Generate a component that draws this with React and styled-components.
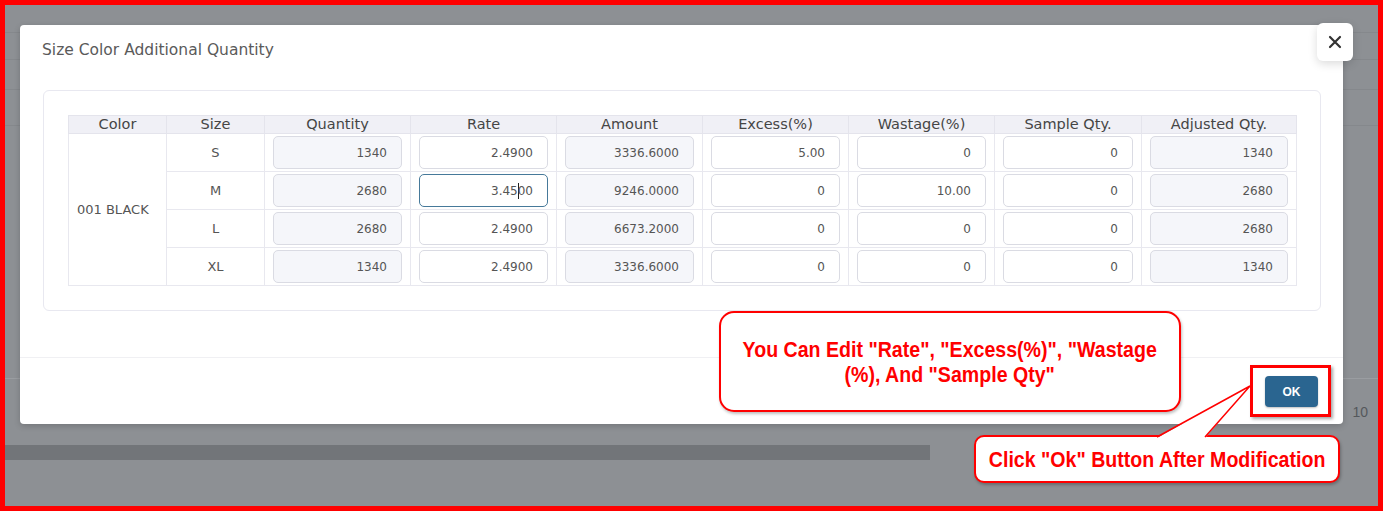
import React from "react";
import styled, { createGlobalStyle } from "styled-components";

const GlobalStyle = createGlobalStyle`
  html, body {
    margin: 0;
    padding: 0;
    background: #fff;
  }
  body {
    font-family: "DejaVu Sans", sans-serif;
  }
`;

const Frame = styled.div`
  position: relative;
  width: 1383px;
  height: 511px;
  box-sizing: border-box;
  border: 5px solid #ff0000;
  background: #8d9094;
  overflow: hidden;
`;

/* page behind the dimmed overlay */
const BgPage = styled.div`
  display: flex;
  flex-direction: column;
  height: 100%;
`;

const BgRow = styled.div`
  height: ${(p) => p.$h}px;
  flex-shrink: 0;
  box-sizing: border-box;
  border-bottom: 1px solid #85888c;
`;

const BgSpacer = styled.div`
  flex: 1;
`;

const BgPager = styled.div`
  height: 67px;
  flex-shrink: 0;
  box-sizing: border-box;
  border-top: 1px solid #9a9da1;
  display: flex;
  align-items: center;
  justify-content: flex-end;
  padding-right: 10px;
  font-family: "Liberation Sans", sans-serif;
  font-size: 14px;
  color: #55585c;
`;

const BgScroll = styled.div`
  height: 15px;
  width: 925px;
  flex-shrink: 0;
  background: #727579;
`;

const BgBottom = styled.div`
  height: 46px;
  flex-shrink: 0;
`;

const Overlay = styled.div`
  position: absolute;
  inset: 0;
  padding: 20px 0 0 15px;
`;

const Modal = styled.div`
  position: relative;
  width: 1323px;
  height: 399px;
  background: #fff;
  border-radius: 4px;
  box-shadow: 0 2px 6px rgba(0, 0, 0, 0.18);
  display: flex;
  flex-direction: column;
`;

const ModalHeader = styled.div`
  height: 50px;
  display: flex;
  align-items: center;
  padding-left: 22px;
`;

const Title = styled.div`
  font-size: 15.5px;
  color: #5a5a5a;
`;

const CloseButton = styled.div`
  position: absolute;
  top: -2px;
  right: -10px;
  width: 36px;
  height: 38px;
  background: #fff;
  border-radius: 6px;
  box-shadow: 0 3px 10px rgba(0, 0, 0, 0.14);
  display: flex;
  align-items: center;
  justify-content: center;
`;

const ModalBody = styled.div`
  padding: 15px 22px 46px 23px;
`;

const Card = styled.div`
  border: 1px solid #e8e8f0;
  border-radius: 6px;
  padding: 24px;
`;

const Table = styled.table`
  width: 1228px;
  border-collapse: collapse;
  table-layout: fixed;
`;

const Th = styled.th`
  box-sizing: border-box;
  width: ${(p) => p.$w}px;
  height: 18px;
  padding: 0;
  line-height: 17px;
  background: #f0f0f6;
  border: 1px solid #e4e4ec;
  font-size: 14.5px;
  font-weight: normal;
  color: #454545;
  text-align: center;
`;

const Td = styled.td`
  height: 37px;
  padding: 0 8px;
  border: 1px solid #e8e8ef;
  font-size: 13px;
  color: #555;
  text-align: ${(p) => p.$align || "center"};
  vertical-align: middle;
`;

const Field = styled.div`
  height: 33px;
  box-sizing: border-box;
  border: 1px solid ${(p) => (p.$focused ? "#46799a" : "#dadbe3")};
  border-radius: 5px;
  background: ${(p) => (p.$readOnly ? "#f5f6fa" : "#fff")};
  display: flex;
  align-items: center;
  justify-content: flex-end;
  padding-right: 14px;
  font-size: 12px;
  color: #555;
`;

const Caret = styled.span`
  display: inline-block;
  width: 1px;
  height: 16px;
  background: #222;
  margin: 0 -1px 0 0;
  vertical-align: middle;
`;

const ModalFooter = styled.div`
  height: 67px;
  box-sizing: border-box;
  border-top: 1px solid #f0f0f3;
  display: flex;
  align-items: center;
  justify-content: flex-end;
  padding-right: 12px;
`;

const Highlight = styled.div`
  border: 3px solid #ff0000;
  padding: 8px 10px 7px 12px;
  box-shadow: 2px 2px 3px rgba(0, 0, 0, 0.35);
`;

const OkButton = styled.div`
  width: 53px;
  height: 31px;
  border-radius: 4px;
  background: #2a6590;
  color: #fff;
  font-family: "Liberation Sans", sans-serif;
  font-size: 12px;
  font-weight: bold;
  display: flex;
  align-items: center;
  justify-content: center;
  box-shadow: 0 1px 2px rgba(0, 0, 0, 0.25);
`;

const Callout = styled.div`
  position: absolute;
  left: ${(p) => p.$x}px;
  top: ${(p) => p.$y}px;
  width: ${(p) => p.$w}px;
  height: ${(p) => p.$h}px;
  box-sizing: border-box;
  border: 2px solid #ff0000;
  border-radius: ${(p) => p.$r}px;
  background: #fff;
  box-shadow: 1px 2px 3px rgba(0, 0, 0, 0.25);
  display: flex;
  align-items: center;
  justify-content: center;
`;

/* narrow bold lettering, like Arial Narrow */
const CalloutText = styled.span`
  display: inline-block;
  white-space: nowrap;
  text-align: center;
  font-family: "Liberation Sans", sans-serif;
  font-weight: bold;
  font-size: 22px;
  line-height: 25px;
  color: #ff0000;
  transform: scaleX(0.89);
`;

const Pointer = styled.svg`
  position: absolute;
  left: 1135px;
  top: 375px;
  overflow: visible;
`;

const columns = [
  ["Color", 98],
  ["Size", 98],
  ["Quantity", 146],
  ["Rate", 146],
  ["Amount", 146],
  ["Excess(%)", 146],
  ["Wastage(%)", 146],
  ["Sample Qty.", 147],
  ["Adjusted Qty.", 155],
];

const rows = [
  { size: "S", qty: "1340", rate: "2.4900", amount: "3336.6000", excess: "5.00", wastage: "0", sample: "0", adjusted: "1340" },
  { size: "M", qty: "2680", rate: "3.4500", amount: "9246.0000", excess: "0", wastage: "10.00", sample: "0", adjusted: "2680", focus: true },
  { size: "L", qty: "2680", rate: "2.4900", amount: "6673.2000", excess: "0", wastage: "0", sample: "0", adjusted: "2680" },
  { size: "XL", qty: "1340", rate: "2.4900", amount: "3336.6000", excess: "0", wastage: "0", sample: "0", adjusted: "1340" },
];

const App = () => {
  return (
    <>
      <GlobalStyle />
      <Frame>
        <BgPage>
          <BgRow $h={28} />
          <BgRow $h={27} />
          <BgRow $h={30} />
          <BgRow $h={36} />
          <BgSpacer />
          <BgPager>10</BgPager>
          <BgScroll />
          <BgBottom />
        </BgPage>

        <Overlay>
          <Modal>
            <ModalHeader>
              <Title>Size Color Additional Quantity</Title>
            </ModalHeader>
            <CloseButton>
              <svg width="14" height="14" viewBox="0 0 14 14">
                <path d="M2 2 L12 12 M12 2 L2 12" stroke="#333" strokeWidth="2.2" strokeLinecap="round" />
              </svg>
            </CloseButton>
            <ModalBody>
              <Card>
                <Table>
                  <thead>
                    <tr>
                      {columns.map(([label, w]) => (
                        <Th key={label} $w={w}>
                          {label}
                        </Th>
                      ))}
                    </tr>
                  </thead>
                  <tbody>
                    {rows.map((r, i) => (
                      <tr key={r.size}>
                        {i === 0 && (
                          <Td rowSpan={4} $align="left">
                            001 BLACK
                          </Td>
                        )}
                        <Td>{r.size}</Td>
                        <Td>
                          <Field $readOnly>{r.qty}</Field>
                        </Td>
                        <Td>
                          {r.focus ? (
                            <Field $focused>
                              3.45
                              <Caret />
                              00
                            </Field>
                          ) : (
                            <Field>{r.rate}</Field>
                          )}
                        </Td>
                        <Td>
                          <Field $readOnly>{r.amount}</Field>
                        </Td>
                        <Td>
                          <Field>{r.excess}</Field>
                        </Td>
                        <Td>
                          <Field>{r.wastage}</Field>
                        </Td>
                        <Td>
                          <Field>{r.sample}</Field>
                        </Td>
                        <Td>
                          <Field $readOnly>{r.adjusted}</Field>
                        </Td>
                      </tr>
                    ))}
                  </tbody>
                </Table>
              </Card>
            </ModalBody>
            <ModalFooter>
              <Highlight>
                <OkButton>OK</OkButton>
              </Highlight>
            </ModalFooter>
          </Modal>
        </Overlay>

        <Callout $x={714} $y={306} $w={462} $h={101} $r={15}>
          <CalloutText>
            You Can Edit "Rate", "Excess(%)", "Wastage
            <br />
            (%), And "Sample Qty"
          </CalloutText>
        </Callout>

        <Callout $x={969} $y={430} $w={366} $h={48} $r={10}>
          <CalloutText>Click "Ok" Button After Modification</CalloutText>
        </Callout>

        <Pointer width="120" height="60">
          <polygon points="17,58 110,6 65,58" fill="#fff" />
          <polyline points="17,57 110,6 65,57" fill="none" stroke="#ff0000" strokeWidth="1.5" />
        </Pointer>
      </Frame>
    </>
  );
};

export default App;
